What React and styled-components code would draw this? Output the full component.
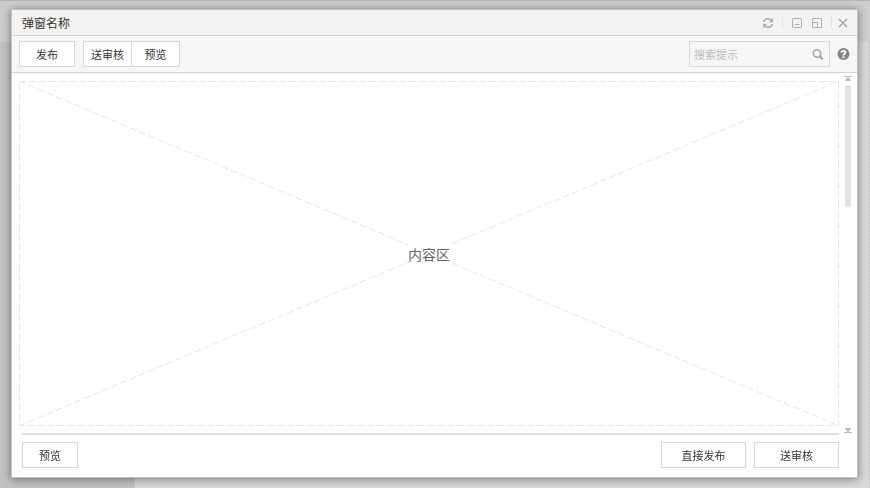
import React from 'react';
import styled, { createGlobalStyle } from 'styled-components';

const GlobalStyle = createGlobalStyle`
  * {
    box-sizing: border-box;
  }

  body {
    margin: 0;
    font-family: 'Noto Sans CJK SC', sans-serif;
    font-size: 11px;
    color: #333;
  }

  button,
  input {
    font-family: inherit;
    font-size: inherit;
  }
`;

const Page = styled.div`
  display: flex;
  flex-direction: column;
  min-height: 100vh;
  background: #d8d8d8;
`;

const PageHeader = styled.div`
  height: 42px;
  border-top: 1px solid #b4b4b4;
  background: #cdcdcd;
`;

const PageBody = styled.div`
  display: flex;
  flex: 1;
  justify-content: space-between;
  border-right: 1px dotted #bdbdbd;
`;

const Sidebar = styled.div`
  width: 135px;
  background: #c1c1c1;
`;

const Dialog = styled.section`
  position: fixed;
  inset: 9px 12px 10px 11px;
  display: flex;
  flex-direction: column;
  border: 1px solid #c4c4c4;
  background: #fff;
  box-shadow: 0 1px 8px rgba(0, 0, 0, 0.45);
`;

const TitleBar = styled.header`
  display: flex;
  align-items: center;
  justify-content: space-between;
  height: 26px;
  padding: 0 7px 0 10px;
  border-bottom: 1px solid #d2d2d2;
  background: #f4f3f2;
`;

const Title = styled.h1`
  margin: 0;
  font-size: 12px;
  font-weight: 400;
  line-height: 18px;
`;

const WindowControls = styled.div`
  display: flex;
  align-items: center;
`;

const IconButton = styled.button`
  display: flex;
  align-items: center;
  justify-content: center;
  width: ${({ width }) => width || 20}px;
  height: 20px;
  padding: 0;
  border: 0;
  background: none;
  color: ${({ color }) => color || '#b0b0b0'};
  cursor: pointer;
`;

const Separator = styled.span`
  width: 1px;
  height: 12px;
  margin: 0 4px;
  background: #e3e3e3;
`;

const Toolbar = styled.div`
  display: flex;
  align-items: center;
  justify-content: space-between;
  height: 37px;
  padding: 0 4px 0 7px;
  border-bottom: 1px solid #d2d2d2;
  background: #f6f6f6;
`;

const Actions = styled.div`
  display: flex;
  align-items: center;
  gap: 8px;
`;

const ButtonGroup = styled.div`
  display: flex;

  button + button {
    margin-left: -1px;
  }
`;

const Button = styled.button`
  width: ${({ width }) => width || 56}px;
  height: 26px;
  padding: 0;
  border: 1px solid #d6d6d6;
  background: #fff;
  color: #333;
  line-height: 16px;
  cursor: pointer;
`;

const SearchTools = styled.div`
  display: flex;
  align-items: center;
  gap: 3px;
`;

const SearchBox = styled.div`
  display: flex;
  align-items: center;
  width: 141px;
  height: 26px;
  padding: 0 1px 0 4px;
  border: 1px solid #d9d9d9;
`;

const SearchInput = styled.input`
  flex: 1;
  min-width: 0;
  padding: 0;
  border: 0;
  outline: 0;
  background: none;

  &::placeholder {
    color: #bcbcbc;
  }
`;

const Body = styled.div`
  display: flex;
  flex: 1;
  min-height: 0;
`;

const Main = styled.main`
  display: flex;
  flex: 1;
  flex-direction: column;
  padding: 8px 0 0 7px;
`;

const ContentArea = styled.div`
  position: relative;
  display: flex;
  flex: 1;
  align-items: center;
  justify-content: center;
`;

const Placeholder = styled.svg`
  position: absolute;
  inset: 0;
  width: 100%;
  height: 100%;
`;

const ContentLabel = styled.span`
  position: relative;
  background: #fff;
  color: #666;
  font-size: 14px;
  line-height: 20px;
`;

const Rule = styled.hr`
  width: calc(100% - 3px);
  margin: 7px 0 0 3px;
  border: 0;
  border-top: 2px solid #dfdfdf;
`;

const ScrollRail = styled.div`
  display: flex;
  flex-direction: column;
  align-items: center;
  width: 18px;
  padding: 3px 0 1px;
`;

const ScrollThumb = styled.div`
  flex: 0 1 122px;
  width: 6px;
  margin: 3px 0 auto;
  border-radius: 3px;
  background: #e2e2e2;
`;

const Footer = styled.footer`
  display: flex;
  justify-content: space-between;
  padding: 7px 18px 9px 10px;
`;

const RefreshIcon = () => (
  <svg width="12" height="12" viewBox="0 0 12 12" fill="none" stroke="currentColor" strokeWidth="1.7">
    <path d="M1.8 5C2.2 1.5 7 .7 9.4 3.4M10.2 7C9.8 10.5 5 11.3 2.6 8.6" />
    <path d="M11 .8v4.4H6.6zM1 11.2V6.8h4.4z" fill="currentColor" stroke="none" />
  </svg>
);

const MinimizeIcon = () => (
  <svg width="10" height="10" viewBox="0 0 10 10" fill="none" stroke="currentColor">
    <rect x=".5" y=".5" width="9" height="9" rx=".5" />
    <path d="M2.5 6.5h5" />
  </svg>
);

const RestoreIcon = () => (
  <svg width="10" height="10" viewBox="0 0 10 10" fill="none" stroke="currentColor">
    <rect x=".5" y=".5" width="9" height="9" rx=".5" />
    <path d="M1 4.5h4.5v5" />
  </svg>
);

const CloseIcon = () => (
  <svg width="10" height="10" viewBox="0 0 10 10" fill="none" stroke="currentColor" strokeWidth="1.3">
    <path d="M1 1l8 8M9 1L1 9" />
  </svg>
);

const SearchIcon = () => (
  <svg width="12" height="12" viewBox="0 0 12 12" fill="none" stroke="currentColor">
    <circle cx="5" cy="5.5" r="3.7" strokeWidth="1.6" />
    <path d="M7.8 8.3l3 3" strokeWidth="2" />
  </svg>
);

const HelpIcon = () => (
  <svg width="13" height="13" viewBox="0 0 13 13" fill="none">
    <circle cx="6.5" cy="6" r="6" fill="currentColor" />
    <path d="M4.5 4.7C4.5 2.2 8.5 2.3 8.5 4.5C8.5 5.9 6.5 5.7 6.5 7.4" stroke="#fff" strokeWidth="1.7" />
    <path d="M5.6 8.3h1.8V10H5.6z" fill="#fff" />
  </svg>
);

const ScrollArrow = ({ down }) => (
  <svg width="8" height="6" viewBox="0 0 8 6" fill="#b9b9b9">
    {down ? <path d="M1 0h6v1L4 4 1 1zM0 4h8v1H0z" /> : <path d="M0 0h8v1H0zM4 1l3 3v1H1V4z" />}
  </svg>
);

const App = () => (
  <>
    <GlobalStyle />
    <Page>
      <PageHeader />
      <PageBody>
        <Sidebar />
      </PageBody>
    </Page>

    <Dialog role="dialog" aria-labelledby="dialog-title">
      <TitleBar>
        <Title id="dialog-title">弹窗名称</Title>
        <WindowControls>
          <IconButton type="button" aria-label="刷新">
            <RefreshIcon />
          </IconButton>
          <Separator />
          <IconButton type="button" aria-label="最小化">
            <MinimizeIcon />
          </IconButton>
          <IconButton type="button" aria-label="还原">
            <RestoreIcon />
          </IconButton>
          <Separator />
          <IconButton type="button" aria-label="关闭" width={14} color="#a0a0a8">
            <CloseIcon />
          </IconButton>
        </WindowControls>
      </TitleBar>

      <Toolbar>
        <Actions>
          <Button type="button">发布</Button>
          <ButtonGroup>
            <Button type="button" width={49}>
              送审核
            </Button>
            <Button type="button" width={49}>
              预览
            </Button>
          </ButtonGroup>
        </Actions>
        <SearchTools>
          <SearchBox>
            <SearchInput type="text" aria-label="搜索" placeholder="搜索提示" />
            <IconButton type="button" aria-label="开始搜索" color="#a3a3a3">
              <SearchIcon />
            </IconButton>
          </SearchBox>
          <IconButton type="button" aria-label="帮助" color="#858585">
            <HelpIcon />
          </IconButton>
        </SearchTools>
      </Toolbar>

      <Body>
        <Main>
          <ContentArea>
            <Placeholder fill="none" stroke="#e6e6e6" strokeDasharray="7 3">
              <rect width="100%" height="100%" strokeWidth="2" />
              <line x1="0" y1="0" x2="100%" y2="100%" />
              <line x1="0" y1="100%" x2="100%" y2="0" />
            </Placeholder>
            <ContentLabel>内容区</ContentLabel>
          </ContentArea>
          <Rule />
        </Main>
        <ScrollRail>
          <ScrollArrow />
          <ScrollThumb />
          <ScrollArrow down />
        </ScrollRail>
      </Body>

      <Footer>
        <Button type="button">预览</Button>
        <Actions>
          <Button type="button" width={85}>
            直接发布
          </Button>
          <Button type="button" width={85}>
            送审核
          </Button>
        </Actions>
      </Footer>
    </Dialog>
  </>
);

export default App;
